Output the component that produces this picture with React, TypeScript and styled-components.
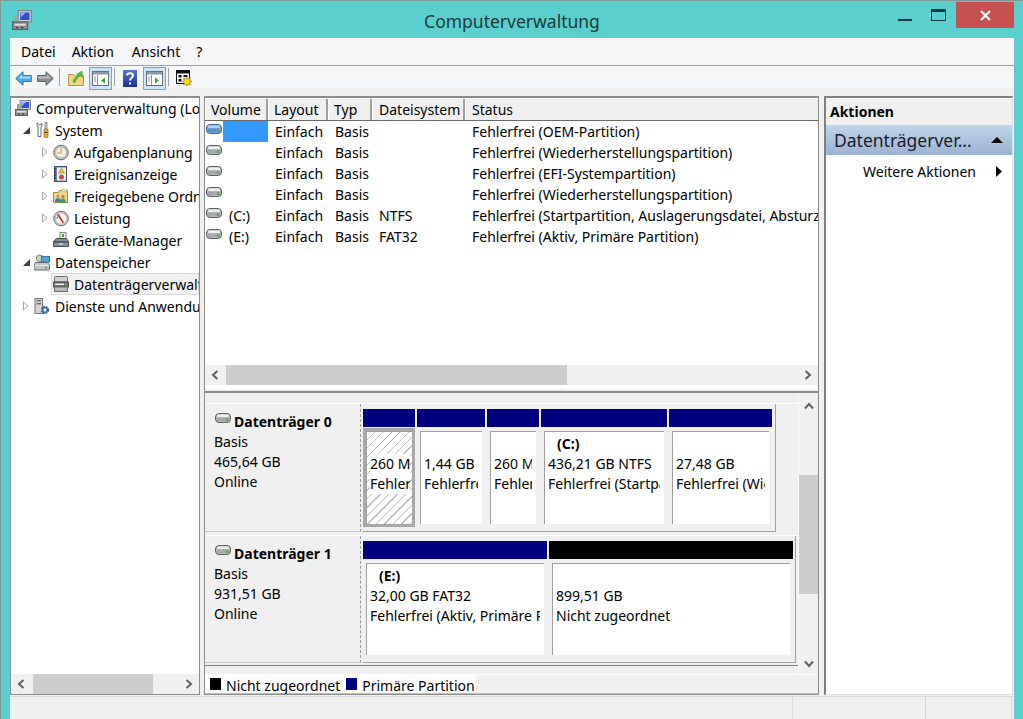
import React from "react";
import styled, { createGlobalStyle } from "styled-components";

const Global = createGlobalStyle`
  html, body { margin: 0; padding: 0; height: 100%; overflow: hidden; }
  #root { height: 100%; }
  * { box-sizing: border-box; }
  body { font-family: "Noto Sans", "Open Sans", "Liberation Sans", sans-serif; font-size: 14px; color: #000; }
`;

const Win = styled.div`
  width: 1023px; height: 719px; background: #5bcfce; display: flex; flex-direction: column;
  border-top: 1px solid #7c9a9a; border-left: 1px solid #7c9a9a; overflow: hidden;
`;
const TitleBar = styled.header`
  height: 37px; flex: none; position: relative; display: flex; align-items: center; padding-left: 11px;
`;
const Title = styled.div`
  position: absolute; left: 0; right: 0; top: 9px; text-align: center; font-size: 17.5px; line-height: 22px; color: #1c3a3a;
`;
const Controls = styled.div`
  position: absolute; top: 1px; right: 9px; display: flex; align-items: flex-start;
`;
const Ctl = styled.div<{ $w: number; $close?: boolean }>`
  width: ${(p) => p.$w}px; height: 26px; display: flex; align-items: center; justify-content: center;
  background: ${(p) => (p.$close ? "#c75050" : "transparent")};
`;
const Client = styled.div`
  flex: 1; margin: 0 9px; background: #f0f0f0; display: flex; flex-direction: column; min-height: 0;
`;
const MenuBar = styled.nav`
  height: 28px; flex: none; background: #f5f6f7; border-bottom: 1px solid #a0a0a0; border-top: 1px solid #fff; display: flex; align-items: center;
  padding-left: 11px; gap: 16px; font-size: 14px;
`;
const MenuItem = styled.span<{ $extra?: number }>`
  line-height: 26px; margin-right: ${(p) => p.$extra ?? 0}px;
`;
const Toolbar = styled.div`
  height: 22px; flex: none; background: #f5f6f7; display: flex; align-items: stretch; padding-left: 3px;
`;
const ToolBtn = styled.div<{ $w: number; $on?: boolean }>`
  width: ${(p) => p.$w}px; height: ${(p) => (p.$on ? 23 : 22)}px; margin-top: ${(p) => (p.$on ? 1 : 0)}px;
  display: flex; align-items: center; justify-content: center; padding-top: ${(p) => (p.$on ? 0 : 2)}px;
  ${(p) => (p.$on ? "background:#cce4f7;border:1px solid #66a7e8;" : "")}
`;
const Sep = styled.div`
  width: 1px; margin: 2px; background: #a0a0a0;
`;
const Panes = styled.div`
  flex: 1; display: flex; padding-top: 8px; min-height: 0; gap: 4px;
`;
const LeftPane = styled.section`
  width: 190px; flex: none; background: #fff; border: 1px solid #8c8c8c; border-top-width: 2px; display: flex; flex-direction: column; overflow: hidden; margin-bottom: 1px;
`;
const Tree = styled.div`flex: 1; overflow: hidden; margin-top: -1px;`;
const TreeRow = styled.div<{ $level: number }>`
  height: 22px; display: flex; align-items: center; white-space: nowrap;
  padding-left: ${(p) => (p.$level === 0 ? 4 : 7 + (p.$level - 1) * 19)}px;
`;
const SelBox = styled.span`
  display: flex; align-items: center; height: 22px; flex: 1; min-width: 0; background: #f2f2f2; border: 1px solid #d9d9d9; margin-left: -2px; padding-left: 1px;
`;
const Arrow = styled.span`width: 16px; flex: none; display: flex; align-items: center; justify-content: center;`;
const TreeIcon = styled.span`width: 16px; height: 16px; flex: none; display: flex; margin-right: 5px;`;
const HBar = styled.div`
  height: 20px; flex: none; background: #f0f0f0; display: flex; align-items: center; justify-content: space-between; position: relative;
`;
const Thumb = styled.div<{ $l: number; $w: number }>`
  position: absolute; top: 0; bottom: 0; left: ${(p) => p.$l}px; width: ${(p) => p.$w}px; background: #cdcdcd;
`;
const Chev = styled.span`width: 20px; height: 20px; display: flex; align-items: center; justify-content: center;`;

const MidPane = styled.section`
  width: 615px; flex: none; display: flex; flex-direction: column; margin-bottom: 1px; margin-right: 1px;
`;
const TablePane = styled.div`
  height: 297px; flex: none; background: #fff; border: 2px solid #8c8c8c; border-width: 2px 1px 0 1px; display: flex; flex-direction: column; overflow: hidden;
`;
const HeadRow = styled.div`
  height: 23px; flex: none; display: flex; background: #f0f0f0; border-bottom: 1px solid #696969; border-top: 1px solid #fff; white-space: nowrap;
`;
const HeadCell = styled.div<{ $w?: number; $p: number }>`
  ${(p) => (p.$w ? `width:${p.$w}px;flex:none;border-right:2px solid #a0a0a0;` : "flex:1;")}
  padding-left: ${(p) => p.$p}px; line-height: 21px; border-left: 1px solid #fff;
`;
const Rows = styled.div`flex: 1; overflow: hidden; background: #fff;`;
const Row = styled.div`height: 21px; display: flex; white-space: nowrap; line-height: 21px;`;
const VolCell = styled.div`width: 63px; flex: none; display: flex;`;
const VolIcon = styled.span`width: 18px; flex: none; padding: 3px 0 0 1px; display: flex; align-items: flex-start;`;
const VolName = styled.span<{ $sel?: boolean }>`
  flex: 1; padding-left: 6px; background: ${(p) => (p.$sel ? "#3399ff" : "transparent")};
`;
const Cell = styled.div<{ $w: number }>`
  width: ${(p) => p.$w}px; flex: none; padding-left: 7px;
`;
const StatusCell = styled.div`flex: 1; padding-left: 7px;`;
const Filler = styled.div`height: 3px; flex: none; background: #fff;`;
const TableEnd = styled.div`
  height: 5px; flex: none; background: #f0f0f0; border-bottom: 2px solid #8c8c8c; box-shadow: inset 0 1px 0 #fff; margin: 0 -1px;
`;
const LowerPane = styled.div`
  flex: 1; min-height: 0; display: flex; flex-direction: column; border-left: 1px solid #8c8c8c; border-right: 1px solid #8c8c8c; border-bottom: 2px solid #8c8c8c; background: #f0f0f0;
`;
const LowerMain = styled.div`height: 281px; flex: none; display: flex;`;
const DiskArea = styled.div`
  flex: 1; min-width: 0; padding-top: 10px; border-bottom: 1px solid #808080; margin-bottom: 8px; display: flex; flex-direction: column; gap: 3px;
`;
const DiskRow = styled.div<{ $h: number }>`
  height: ${(p) => p.$h}px; flex: none; display: flex; border-top: 1px solid #fff;
`;
const DiskInfo = styled.div`
  width: 156px; flex: none; padding: 8px 0 0 9px; line-height: 20px; border-right: 1px dashed #9a9a9a; border-bottom: 1px solid #c8c8c8;
`;
const DiskName = styled.div`display: flex; align-items: flex-start; font-weight: 700; gap: 3px; height: 20px; padding-left: 1px;`;
const DiskIcon = styled.span`display: flex; margin-top: 1px;`;
const Volumes = styled.div<{ $w: number }>`
  width: ${(p) => p.$w}px; flex: none; margin-left: 2px; padding: 5px 2px 4px 0; display: flex; gap: 2px; border-right: 1px solid #a0a0a0; border-bottom: 1px solid #a0a0a0;
`;
const Part = styled.div<{ $w: number }>`
  width: ${(p) => p.$w}px; flex: none; display: flex; flex-direction: column; min-width: 0;
`;
const PartHead = styled.div<{ $c: string }>`
  height: 18px; flex: none; background: ${(p) => p.$c};
`;
const PartBody = styled.div<{ $sel?: boolean }>`
  flex: 1; min-height: 0; display: flex; padding: ${(p) => (p.$sel ? "0" : "3px")}; margin-top: 1px;
  ${(p) => (p.$sel ? "border: 3px solid #a8a8a8;" : "")}
`;
const PartInner = styled.div<{ $hatch?: boolean }>`
  flex: 1; min-width: 0; border-top: 1px solid #a0a0a0; border-left: 1px solid #a0a0a0; padding: 2px ${(p) => (p.$hatch ? 2 : 4)}px 0 3px;
  line-height: 20px; white-space: nowrap;
  background: ${(p) => (p.$hatch ? "repeating-linear-gradient(135deg,#fff 0,#fff 5px,#bdbdbd 5px,#bdbdbd 6px)" : "#fff")};
`;
const PartClip = styled.div`overflow: hidden;`;
const PartLabel = styled.div`font-weight: 700; padding-left: 9px; height: 20px;`;
const PartLine = styled.div<{ $plain?: boolean }>`
  ${(p) => (p.$plain ? "background:#fff;" : "")}
`;
const VBar = styled.div`
  width: 20px; flex: none; background: #f0f0f0; display: flex; flex-direction: column; justify-content: space-between; position: relative; border-left: 1px solid #fafafa; padding-top: 3px;
`;
const VThumb = styled.div`
  position: absolute; left: 0; right: 0; top: 82px; height: 119px; background: #cdcdcd;
`;
const Legend = styled.div`
  height: 20px; flex: none; display: flex; overflow: hidden; background: #f0f0f0; border-top: 1px solid #fff;
`;
const LegendItem = styled.div`
  display: flex; white-space: nowrap; height: 19px; background: #fff; padding-left: 5px; border-bottom: 1px solid #c0c0c0;
`;
const LegendMark = styled.span<{ $c: string }>`
  width: 11px; height: 12px; margin-top: 3px; background: ${(p) => p.$c}; margin-right: 5px; flex: none;
`;
const LegendText = styled.span`line-height: 22px; height: 19px; overflow: hidden; padding-right: 1px;`;
const LegendRest = styled.div`flex: 1; height: 19px; border-bottom: 1px solid #c0c0c0; background: #f0f0f0;`;

const RightPane = styled.aside`
  flex: 1; margin-bottom: 1px; background: #fff; border-left: 2px solid #808080; border-top: 2px solid #808080; border-right: 1px solid #e0e0e0; border-bottom: 1px solid #e0e0e0; margin-right: 1px; display: flex; flex-direction: column;
`;
const ActHead = styled.div`
  height: 27px; flex: none; background: #f0f0f0; font-weight: 700; padding-left: 4px; line-height: 26px; border-top: 1px solid #fff;
`;
const ActBand = styled.div`
  height: 30px; flex: none; display: flex; align-items: center; justify-content: space-between; padding: 0 9px 0 8px; font-size: 17.5px;
  background: linear-gradient(#bfd5ec, #9cb3d0); color: #1a1a2a;
`;
const ActItem = styled.div`
  display: flex; align-items: center; justify-content: space-between; height: 22px; margin-top: 5px; padding: 0 10px 0 37px;
`;
const Status = styled.footer`
  height: 23px; flex: none; background: #f0f0f0; border-top: 1px solid #d9d9d9; display: flex; justify-content: flex-end; padding-right: 2px;
`;
const StatusPart = styled.div<{ $w: number; $last?: boolean }>`
  width: ${(p) => p.$w}px; border-left: 1px solid #d9d9d9; ${(p) => (p.$last ? "border-right: 1px solid #d9d9d9;" : "")}
`;

const Hdd = ({ blue }: { blue?: boolean }) => (
  <svg width="16" height="10" viewBox="0 0 16 10">
    <rect x=".5" y=".5" width="15" height="9" rx="3.500" fill={blue ? "#6fa4dc" : "#b4b7ba"} stroke={blue ? "#44709f" : "#5f6063"} />
    <rect x="2" y="1.500" width="12" height="2.500" rx="1" fill={blue ? "#b5d5f5" : "#f1f1f1"} />
    <rect x="2" y="5" width="12" height="3" fill={blue ? "#5a8fc8" : "#a6a8ab"} />
    <rect x="11" y="5" width="2" height="3" fill="#54ad45" />
  </svg>
);
const Computer = ({ size = 16 }: { size?: number }) => (
  <svg width={size} height={size} viewBox="0 0 16 16">
    <rect x="5" y="0.500" width="10.500" height="9" fill="#cfd3d8" stroke="#7f8790" />
    <rect x="6.500" y="2" width="7.500" height="6" fill="#2d4fd0" />
    <path d="M7 2h4L7 6z" fill="#8fb0f5" />
    <rect x="0.500" y="9.500" width="12" height="6" fill="#8d9196" stroke="#5c6066" />
    <rect x="2" y="11" width="9" height="1.500" fill="#e0e0e0" />
    <rect x="3" y="13.500" width="2" height="1" fill="#333" />
    <rect x="7" y="13.500" width="2" height="1" fill="#333" />
    <rect x="2" y="4" width="3" height="5" fill="#9ea3a8" />
  </svg>
);
const Tools = () => (
  <svg width="16" height="16" viewBox="0 0 16 16">
    <path d="M3 1v3l1 1v9.500h3V5l1-1V1L6.500 3h-1z" fill="#f4f4f4" stroke="#707070" />
    <rect x="11" y="0.500" width="2" height="7" fill="#d0d0d0" stroke="#6a6a6a" strokeWidth=".6" />
    <rect x="10" y="7" width="4" height="8.500" rx="1" fill="#f2b01e" stroke="#8a6208" strokeWidth=".7" />
    <rect x="10.500" y="10" width="3" height="1" fill="#333" />
  </svg>
);
const Clock = () => (
  <svg width="17" height="17" viewBox="0 0 17 17">
    <circle cx="8.500" cy="8.500" r="7.800" fill="#c4c4c4" stroke="#666" />
    <circle cx="8.500" cy="8.500" r="5.800" fill="#f3f1e6" stroke="#999" strokeWidth=".6" />
    <path d="M8.500 4v5H4" fill="none" stroke="#d09a30" strokeWidth="1.200" />
  </svg>
);
const EventLog = () => (
  <svg width="16" height="16" viewBox="0 0 16 16">
    <rect x="1.500" y="0.500" width="12" height="15" fill="#6f86a8" stroke="#3e5270" />
    <rect x="4" y="1.500" width="9" height="13" fill="#eef0f4" />
    <path d="M1 3h2M1 6h2M1 9h2M1 12h2" stroke="#222" />
    <path d="M8.500 2l3 5h-6z" fill="#f4c320" stroke="#9d7a10" strokeWidth=".6" />
    <circle cx="8.500" cy="11" r="2.500" fill="#d6453b" />
  </svg>
);
const SharedFolder = () => (
  <svg width="16" height="16" viewBox="0 0 16 16">
    <path d="M.5 4.500h5l1-2h8v12H.5z" fill="#efd48a" stroke="#a88a3c" />
    <rect x="9" y="1" width="5" height="2" fill="#f6f0d8" stroke="#b9a366" strokeWidth=".5" />
    <circle cx="5" cy="8" r="1.600" fill="#c98e4a" />
    <path d="M2 14c0-3 1-4 3-4s3 1 3 4z" fill="#3b7fb5" />
    <circle cx="10" cy="8.500" r="1.600" fill="#b77a3d" />
    <path d="M7 15c0-3 1-4.500 3-4.500s3 1.500 3 4.500z" fill="#4a9a5c" />
  </svg>
);
const Gauge = () => (
  <svg width="17" height="17" viewBox="0 0 17 17">
    <circle cx="8.500" cy="8.500" r="7.800" fill="#d4d4d4" stroke="#666" />
    <circle cx="8.500" cy="8.500" r="6" fill="#fdfdfd" stroke="#8a8a8a" strokeWidth=".6" />
    <path d="M5 4l6 9" stroke="#cc2a20" strokeWidth="1.800" />
    <path d="M4 9a5 5 0 0 1 3-4" fill="none" stroke="#2f6bb0" />
  </svg>
);
const DevMgr = () => (
  <svg width="16" height="16" viewBox="0 0 16 16">
    <rect x="7" y="0.500" width="6" height="6" fill="#eee" stroke="#888" />
    <rect x="9" y="2" width="2" height="3" fill="#4fa84a" />
    <path d="M3.500 6.500h10l2 3v5H.5v-5z" fill="#8a8f96" stroke="#4a4f56" />
    <rect x="1" y="9.500" width="14" height="1" fill="#2b2f36" />
    <rect x="6" y="11" width="4" height="1.500" fill="#d8d8d8" />
  </svg>
);
const Storage = () => (
  <svg width="17" height="17" viewBox="0 0 17 17">
    <circle cx="6" cy="4" r="3.500" fill="#c9d7c9" stroke="#6a7a6a" />
    <rect x="8" y="2" width="8.500" height="6" fill="#49a7dd" stroke="#2a6d9a" />
    <path d="M1.500 8.500h13l2 3v4q0 1-1 1H1q-1 0-1-1v-4z" fill="#c3c6c9" stroke="#5f6367" />
    <rect x="1" y="11" width="15" height="1" fill="#f2f2f2" />
    <rect x="12" y="13" width="2" height="2" fill="#54ad45" />
  </svg>
);
const DiskMgmt = () => (
  <svg width="16" height="16" viewBox="0 0 16 16">
    <rect x="1.500" y="0.500" width="13" height="5.500" rx="1" fill="#d0d2d4" stroke="#6e6e6e" />
    <rect x="0.500" y="6" width="15" height="5" fill="#6a6d72" stroke="#4c4c4c" />
    <rect x="2" y="7.500" width="9" height="1.500" fill="#efefef" />
    <rect x="12" y="7.500" width="2" height="2" fill="#4fb54a" />
    <rect x="1.500" y="11" width="13" height="4.500" fill="#b8babd" stroke="#6e6e6e" />
  </svg>
);
const Services = () => (
  <svg width="16" height="17" viewBox="0 0 16 17">
    <rect x="1" y="0.500" width="7.500" height="15" fill="#d4d6da" stroke="#777" />
    <rect x="2.500" y="2" width="4.500" height="1.500" fill="#6b7078" />
    <rect x="2.500" y="5" width="4.500" height="1.500" fill="#6b7078" />
    <circle cx="11" cy="12" r="3.200" fill="#5d8fc9" stroke="#33608f" strokeWidth="2" strokeDasharray="1.600 1" />
    <circle cx="11" cy="12" r="1.200" fill="#fff" />
  </svg>
);
const TriDown = () => (
  <svg width="7" height="7" viewBox="0 0 7 7"><path d="M7 0v7H0z" fill="#404040" /></svg>
);
const TriRight = () => (
  <svg width="6" height="10" viewBox="0 0 6 10"><path d="M.5 1l4.500 4-4.500 4z" fill="#fff" stroke="#a6a6a6" /></svg>
);
const ChevL = () => (
  <svg width="8" height="10" viewBox="0 0 8 10"><path d="M6.500 1L2 5l4.500 4" fill="none" stroke="#606060" strokeWidth="2" /></svg>
);
const ChevR = () => (
  <svg width="8" height="10" viewBox="0 0 8 10"><path d="M1.500 1L6 5 1.500 9" fill="none" stroke="#606060" strokeWidth="2" /></svg>
);
const ChevU = () => (
  <svg width="10" height="8" viewBox="0 0 10 8"><path d="M1 6.500L5 2l4 4.500" fill="none" stroke="#606060" strokeWidth="2" /></svg>
);
const ChevD = () => (
  <svg width="10" height="8" viewBox="0 0 10 8"><path d="M1 1.500L5 6l4-4.500" fill="none" stroke="#606060" strokeWidth="2" /></svg>
);
const BackArrow = () => (
  <svg width="17" height="15" viewBox="0 0 17 15">
    <path d="M8 .7L.7 7.500 8 14.300V10.500h8.300v-6H8z" fill="#4aa8ea" stroke="#2478b8" />
    <path d="M7 3.500L3 7.500h12.500V5.500H7z" fill="#a7dbfb" />
  </svg>
);
const FwdArrow = () => (
  <svg width="17" height="15" viewBox="0 0 17 15">
    <path d="M9 .7l7.300 6.800L9 14.300V10.500H.7v-6H9z" fill="#8c8c8c" stroke="#5f5f5f" />
    <path d="M10 3.500l4 4H1.500V5.500H10z" fill="#bdbdbd" />
  </svg>
);
const FolderUp = () => (
  <svg width="16" height="16" viewBox="0 0 16 16">
    <path d="M.5 4.500h5l1 1.500h9v9.500H.5z" fill="#f3d58c" stroke="#b4944a" />
    <path d="M5 12c1-4 3-5 5-6L8.500 4.500 14 1l.5 6-2-1.500C10 7.500 8 9 7 12.500z" fill="#58c13a" stroke="#2e8a1e" strokeWidth=".5" />
  </svg>
);
const PaneIcon = ({ right }: { right?: boolean }) => (
  <svg width="17" height="15" viewBox="0 0 17 15">
    <rect x="0.500" y="0.500" width="16" height="14" fill="#fff" stroke="#6d6d6d" />
    <rect x="1" y="1" width="15" height="2.500" fill="#8e98a6" />
    <path d="M5.500 4v10" stroke="#8f8f8f" />
    <path d="M2 6h2M2 8h2M2 10h2" stroke="#909090" />
    <path d={right ? "M9 6.500l4 3-4 3z" : "M13 6.500l-4 3 4 3z"} fill="#30a838" />
  </svg>
);
const HelpIcon = () => (
  <svg width="14" height="17" viewBox="0 0 14 17">
    <defs><linearGradient id="hg" x1="0" y1="0" x2="0" y2="1"><stop offset="0" stopColor="#5a74d0" /><stop offset="1" stopColor="#1b2f96" /></linearGradient></defs>
    <rect x="0" y="0" width="14" height="17" fill="url(#hg)" />
    <path d="M4 5.500c0-3 6-3 6 0 0 2.500-3 2.500-3 5M7 12.500v2" fill="none" stroke="#fff" strokeWidth="2" />
  </svg>
);
const PropsIcon = () => (
  <svg width="17" height="17" viewBox="0 0 17 17">
    <rect x="0.500" y="0.500" width="13" height="13" fill="#fff" stroke="#111" />
    <rect x="1" y="1" width="12" height="2.500" fill="#111" />
    <path d="M2.500 5h3v2.500h-3zM2.500 9h3v2.500h-3zM7.500 5h4v2h-4zM7.500 8.500h1v1h-1z" fill="#111" />
    <path d="M11 7l1 2.200 2.300-1-.6 2.500 2.300.8-2.300 1 .6 2.500-2.300-1-1 2.200-1-2.200-2.300 1 .6-2.500-2.300-1 2.300-.8-.6-2.500 2.300 1z" fill="#ffdf00" stroke="#8a7400" strokeWidth=".6" />
  </svg>
);

const COL = [60, 44, 93];
const rows: [string, string, string, boolean?][] = [
  ["", "", "Fehlerfrei (OEM-Partition)", true],
  ["", "", "Fehlerfrei (Wiederherstellungspartition)"],
  ["", "", "Fehlerfrei (EFI-Systempartition)"],
  ["", "", "Fehlerfrei (Wiederherstellungspartition)"],
  ["(C:)", "NTFS", "Fehlerfrei (Startpartition, Auslagerungsdatei, Absturzabbild, Primäre Partition)"],
  ["(E:)", "FAT32", "Fehlerfrei (Aktiv, Primäre Partition)"],
];

const disk0 = [
  { w: 52, l: "", a: "260 MB", b: "Fehlerfrei (OEM-Partition)", sel: true },
  { w: 68, l: "", a: "1,44 GB", b: "Fehlerfrei (Wiederherstellung)" },
  { w: 52, l: "", a: "260 MB", b: "Fehlerfrei (EFI)" },
  { w: 126, l: "(C:)", a: "436,21 GB NTFS", b: "Fehlerfrei (Startpartition)" },
  { w: 103, l: "", a: "27,48 GB", b: "Fehlerfrei (Wiederherstellung)" },
];
const disk1 = [
  { w: 184, l: "(E:)", a: "32,00 GB FAT32", b: "Fehlerfrei (Aktiv, Primäre Partition)", c: "#000080" },
  { w: 244, l: "", a: "899,51 GB", b: "Nicht zugeordnet", c: "#000000" },
];

const PartView = ({ p }: { p: { w: number; l: string; a: string; b: string; sel?: boolean; c?: string } }) => (
  <Part $w={p.w}>
    <PartHead $c={p.c ?? "#000080"} />
    <PartBody $sel={p.sel}>
      <PartInner $hatch={p.sel}>
        <PartClip>
          <PartLabel>{p.l}</PartLabel>
          <PartLine $plain={p.sel}>{p.a}</PartLine>
          <PartLine $plain={p.sel}>{p.b}</PartLine>
        </PartClip>
      </PartInner>
    </PartBody>
  </Part>
);

export default function App() {
  return (
    <Win>
      <Global />
      <TitleBar>
        <Computer size={20} />
        <Title>Computerverwaltung</Title>
        <Controls>
          <Ctl $w={32}>
            <svg width="14" height="14" viewBox="0 0 14 14"><rect x="0" y="11" width="14" height="2" fill="#17393a" /></svg>
          </Ctl>
          <Ctl $w={35}>
            <svg width="15" height="12" viewBox="0 0 15 12"><rect x=".5" y=".5" width="14" height="11" fill="none" stroke="#17393a" /><rect x="0" y="0" width="15" height="3" fill="#17393a" /></svg>
          </Ctl>
          <Ctl $w={58} $close>
            <svg width="11" height="11" viewBox="0 0 11 11"><path d="M1 1l9 9M10 1l-9 9" stroke="#fff" strokeWidth="2.200" /></svg>
          </Ctl>
        </Controls>
      </TitleBar>
      <Client>
        <MenuBar>
          <MenuItem>Datei</MenuItem>
          <MenuItem $extra={2}>Aktion</MenuItem>
          <MenuItem>Ansicht</MenuItem>
          <MenuItem>?</MenuItem>
        </MenuBar>
        <Toolbar>
          <ToolBtn $w={20}><BackArrow /></ToolBtn>
          <ToolBtn $w={24}><FwdArrow /></ToolBtn>
          <Sep />
          <ToolBtn $w={27}><FolderUp /></ToolBtn>
          <ToolBtn $w={23} $on><PaneIcon /></ToolBtn>
          <Sep />
          <ToolBtn $w={26}><HelpIcon /></ToolBtn>
          <ToolBtn $w={23} $on><PaneIcon right /></ToolBtn>
          <Sep />
          <ToolBtn $w={27}><PropsIcon /></ToolBtn>
        </Toolbar>
        <Panes>
          <LeftPane>
            <Tree>
              <TreeRow $level={0}><TreeIcon><Computer /></TreeIcon>Computerverwaltung (Lokal)</TreeRow>
              <TreeRow $level={1}><Arrow><TriDown /></Arrow><TreeIcon><Tools /></TreeIcon>System</TreeRow>
              <TreeRow $level={2}><Arrow><TriRight /></Arrow><TreeIcon><Clock /></TreeIcon>Aufgabenplanung</TreeRow>
              <TreeRow $level={2}><Arrow><TriRight /></Arrow><TreeIcon><EventLog /></TreeIcon>Ereignisanzeige</TreeRow>
              <TreeRow $level={2}><Arrow><TriRight /></Arrow><TreeIcon><SharedFolder /></TreeIcon>Freigegebene Ordner</TreeRow>
              <TreeRow $level={2}><Arrow><TriRight /></Arrow><TreeIcon><Gauge /></TreeIcon>Leistung</TreeRow>
              <TreeRow $level={2}><Arrow /><TreeIcon><DevMgr /></TreeIcon>Geräte-Manager</TreeRow>
              <TreeRow $level={1}><Arrow><TriDown /></Arrow><TreeIcon><Storage /></TreeIcon>Datenspeicher</TreeRow>
              <TreeRow $level={2}><Arrow /><SelBox><TreeIcon><DiskMgmt /></TreeIcon>Datenträgerverwaltung</SelBox></TreeRow>
              <TreeRow $level={1}><Arrow><TriRight /></Arrow><TreeIcon><Services /></TreeIcon>Dienste und Anwendungen</TreeRow>
            </Tree>
            <HBar>
              <Thumb $l={22} $w={120} />
              <Chev><ChevL /></Chev>
              <Chev><ChevR /></Chev>
            </HBar>
          </LeftPane>
          <MidPane>
            <TablePane>
              <HeadRow>
                <HeadCell $w={63} $p={5}>Volume</HeadCell>
                <HeadCell $w={COL[0]} $p={5}>Layout</HeadCell>
                <HeadCell $w={COL[1]} $p={5}>Typ</HeadCell>
                <HeadCell $w={COL[2]} $p={6}>Dateisystem</HeadCell>
                <HeadCell $p={6}>Status</HeadCell>
              </HeadRow>
              <Rows>
                {rows.map((r, i) => (
                  <Row key={i}>
                    <VolCell>
                      <VolIcon><Hdd blue={r[3]} /></VolIcon>
                      <VolName $sel={r[3]}>{r[0]}</VolName>
                    </VolCell>
                    <Cell $w={COL[0]}>Einfach</Cell>
                    <Cell $w={COL[1]}>Basis</Cell>
                    <Cell $w={COL[2]}>{r[1]}</Cell>
                    <StatusCell>{r[2]}</StatusCell>
                  </Row>
                ))}
              </Rows>
              <HBar>
                <Thumb $l={21} $w={341} />
                <Chev><ChevL /></Chev>
                <Chev><ChevR /></Chev>
              </HBar>
              <Filler />
              <TableEnd />
            </TablePane>
            <LowerPane>
              <LowerMain>
                <DiskArea>
                  <DiskRow $h={129}>
                    <DiskInfo>
                      <DiskName><DiskIcon><Hdd /></DiskIcon>Datenträger 0</DiskName>
                      <div>Basis</div>
                      <div>465,64 GB</div>
                      <div>Online</div>
                    </DiskInfo>
                    <Volumes $w={413}>
                      {disk0.map((p, i) => <PartView key={i} p={p} />)}
                    </Volumes>
                  </DiskRow>
                  <DiskRow $h={128}>
                    <DiskInfo>
                      <DiskName><DiskIcon><Hdd /></DiskIcon>Datenträger 1</DiskName>
                      <div>Basis</div>
                      <div>931,51 GB</div>
                      <div>Online</div>
                    </DiskInfo>
                    <Volumes $w={433}>
                      {disk1.map((p, i) => <PartView key={i} p={p} />)}
                    </Volumes>
                  </DiskRow>
                </DiskArea>
                <VBar>
                  <VThumb />
                  <Chev><ChevU /></Chev>
                  <Chev><ChevD /></Chev>
                </VBar>
              </LowerMain>
              <Legend>
                <LegendItem><LegendMark $c="#000" /><LegendText>Nicht zugeordnet</LegendText></LegendItem>
                <LegendItem><LegendMark $c="#000080" /><LegendText>Primäre Partition</LegendText></LegendItem>
                <LegendRest />
              </Legend>
            </LowerPane>
          </MidPane>
          <RightPane>
            <ActHead>Aktionen</ActHead>
            <ActBand>
              Datenträgerver...
              <svg width="12" height="6" viewBox="0 0 12 6"><path d="M6 0l6 6H0z" fill="#000" /></svg>
            </ActBand>
            <ActItem>
              Weitere Aktionen
              <svg width="6" height="11" viewBox="0 0 6 11"><path d="M0 0l6 5.500L0 11z" fill="#000" /></svg>
            </ActItem>
          </RightPane>
        </Panes>
        <Status>
          <StatusPart $w={133} />
          <StatusPart $w={87} $last />
        </Status>
      </Client>
    </Win>
  );
}
